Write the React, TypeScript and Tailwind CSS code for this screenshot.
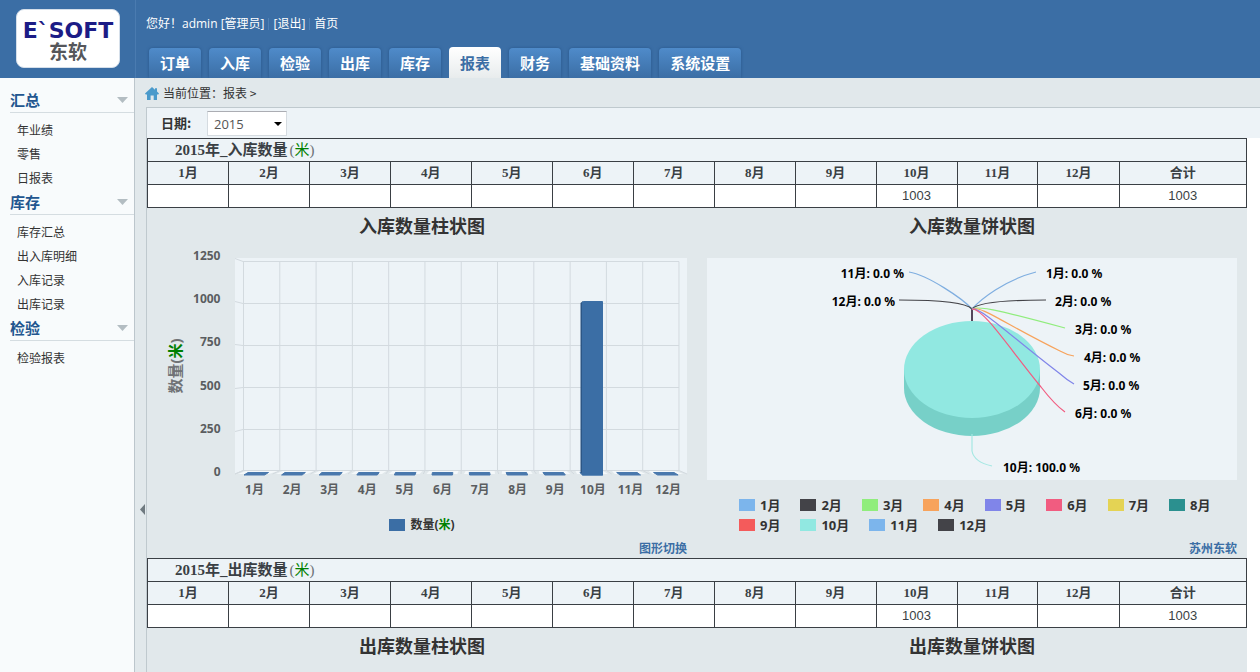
import React from "react";

const months = ["1月", "2月", "3月", "4月", "5月", "6月", "7月", "8月", "9月", "10月", "11月", "12月"];

const tabs = ["订单", "入库", "检验", "出库", "库存", "报表", "财务", "基础资料", "系统设置"];

const menu = [
  { title: "汇总", items: ["年业绩", "零售", "日报表"] },
  { title: "库存", items: ["库存汇总", "出入库明细", "入库记录", "出库记录"] },
  { title: "检验", items: ["检验报表"] },
];

const legend = [
  ["1月", "bg-[#7cb5ec]"],
  ["2月", "bg-[#434348]"],
  ["3月", "bg-[#90ed7d]"],
  ["4月", "bg-[#f7a35c]"],
  ["5月", "bg-[#8085e9]"],
  ["6月", "bg-[#f15c80]"],
  ["7月", "bg-[#e4d354]"],
  ["8月", "bg-[#2b908f]"],
  ["9月", "bg-[#f45b5b]"],
  ["10月", "bg-[#91e8e1]"],
  ["11月", "bg-[#7cb5ec]"],
  ["12月", "bg-[#434348]"],
];

const sans = "font-['Noto_Sans','Noto_Sans_CJK_SC',sans-serif]";
const serif = "font-['Liberation_Serif','Noto_Sans_CJK_SC',serif]";

function Logo() {
  return (
    <a
      href="#home"
      className="flex h-[59px] w-[104px] flex-col items-center rounded-lg border border-[#d5dfea] bg-white pt-[10px] font-bold"
    >
      <span className="font-['DejaVu_Sans',sans-serif] text-[22px] leading-[22px] text-[#1c1c86]">E`SOFT</span>
      <span className="text-[19px] leading-[18px] text-[#55565a]">东软</span>
    </a>
  );
}

function Header() {
  return (
    <header className="flex h-[78px] bg-[#3b6ea5] text-white">
      <div className="w-[136px] shrink-0 border-r border-[#4a7bb0] pt-[9px] pl-4">
        <Logo />
      </div>
      <div className="flex flex-1 flex-col justify-between">
        <div className="flex items-center pt-4 pl-[10px] font-['Open_Sans','Noto_Sans_CJK_SC',sans-serif] text-xs leading-4">
          <span>您好！admin [管理员]</span>
          <span className="mx-1 h-3 w-px bg-[#4f80b5]" />
          <a href="#logout">[退出]</a>
          <span className="mx-1 h-3 w-px bg-[#4f80b5]" />
          <a href="#home">首页</a>
        </div>
        <nav className="flex items-end gap-2 overflow-hidden pt-1 pl-[13px]">
          {tabs.map((t) => (
            <a
              key={t}
              href={"#" + t}
              className={
                t === "报表"
                  ? "h-[31px] rounded-t bg-linear-to-b from-white to-[#e8eced] px-[11px] text-[15px] leading-[32px] font-bold text-[#3b6ea5]"
                  : "h-[30px] rounded-t bg-linear-to-b from-[#4f8bca] to-[#3b6ea5] px-[11px] text-[15px] leading-[30px] font-bold text-white shadow-[0_0_3px_#27558a]"
              }
            >
              {t}
            </a>
          ))}
        </nav>
      </div>
    </header>
  );
}

function Sidebar() {
  return (
    <aside className="w-[135px] shrink-0 border-r border-[#bcc6cc] bg-[#f8fbfc] pt-[10px]">
      {menu.map((g) => (
        <section key={g.title} className="pl-[10px]">
          <button
            type="button"
            className="flex w-full items-center justify-between border-b border-[#d5dde1] pr-[6px] text-[15px] leading-6 font-bold text-[#22568f]"
          >
            {g.title}
            <svg width="11" height="6" viewBox="0 0 11 6" aria-hidden="true">
              <path d="M0 0h11L5.500 6z" fill="#b3bdc2" />
            </svg>
          </button>
          <ul className="pt-[5px] pl-[7px] text-xs leading-6 text-[#333]">
            {g.items.map((i) => (
              <li key={i}>
                <a href={"#" + i}>{i}</a>
              </li>
            ))}
          </ul>
        </section>
      ))}
    </aside>
  );
}

function QuantityTable({ name }: { name: string }) {
  return (
    <table className="w-full table-fixed border-collapse text-center text-[13px] text-[#3a3f44]">
      <colgroup>
        {months.map((m) => (
          <col key={m} />
        ))}
        <col className="w-[11.6%]" />
      </colgroup>
      <thead className={`bg-[#edf3f7] ${serif}`}>
        <tr className="h-[23px]">
          <th colSpan={13} className="border border-[#3a3f44] py-0 pl-[27px] text-left text-[15px] leading-[22px]">
            2015年_{name}
            <span className="pl-[2px] font-normal text-[#6b7075]">
              (<span className="text-[#008000]">米</span>)
            </span>
          </th>
        </tr>
        <tr className="h-[23px]">
          {[...months, "合计"].map((m) => (
            <th key={m} className="border border-[#3a3f44] p-0 leading-[22px]">
              {m}
            </th>
          ))}
        </tr>
      </thead>
      <tbody className="bg-white font-['Liberation_Sans',sans-serif]">
        <tr className="h-[23px]">
          {[...months, "合计"].map((m) => (
            <td key={m} className="border border-[#3a3f44] p-0 leading-[22px]">
              {m === "10月" || m === "合计" ? "1003" : ""}
            </td>
          ))}
        </tr>
      </tbody>
    </table>
  );
}

const gridRows = [
  { label: "1250", back: 17.5, front: 14.5 },
  { label: "1000", back: 59.5, front: 57.5 },
  { label: "750", back: 101.5, front: 100.5 },
  { label: "500", back: 143.5, front: 144.5 },
  { label: "250", back: 185.5, front: 187.5 },
  { label: "0", back: 226.5, front: 230 },
];

function BarPlot() {
  return (
    <svg viewBox="0 0 550 251" className={`block h-auto w-full overflow-visible font-bold ${sans}`}>
      <path d="M88 14H540V230L532 226.500H96L88 230z" fill="#edf3f7" />
      <g stroke="#d3dadf" fill="none">
        {gridRows.map((r) => (
          <path key={r.label} d={`M88 ${r.front}L96 ${r.back}H532`} />
        ))}
        {Array.from({ length: 13 }, (_, i) => {
          const x = 96.5 + i * 36.29;
          return <path key={i} d={`M${x} 17.500V226.500L${88 + i * 37.67} 230`} />;
        })}
      </g>
      <g fill="#f4f8fa">
        {months.map((m, i) => (
          <path key={m} d={`M${91 + i * 37.67} 230L${99 + i * 36.6} 227H${131 + i * 36.1}L${122 + i * 37.67} 230z`} />
        ))}
      </g>
      {months.map((m, i) => {
        const x = 97 + i * 37.6;
        const s = 4 - i * 0.73;
        return <path key={m} d={`M${x} 231L${x + s} 228.500H${x + s + 20.5}L${x + 20.5} 231z`} fill="#4a79ad" stroke="#4a79ad" strokeLinejoin="round" />;
      })}
      <path d="M433.500 59L436 57V228L436 231L433.500 228z" fill="#2c5685" />
      <path d="M435.500 58L437 57.500H455.500V231H435.500z" fill="#3b6ea5" stroke="#3b6ea5" strokeLinejoin="round" />
      <g fontSize="12" fill="#5a5d60">
        {gridRows.map((r, i) => (
          <text key={r.label} x="73.500" y={16 + i * 43.2} textAnchor="end">
            {r.label}
          </text>
        ))}
        {months.map((m, i) => (
          <text key={m} x={107.5 + i * 37.6} y="249.500" textAnchor="middle">
            {m}
          </text>
        ))}
      </g>
      <text transform="translate(34 122) rotate(-90)" textAnchor="middle" fontSize="15" fill="#707376">
        数量(<tspan fill="#008000">米</tspan>)
      </text>
    </svg>
  );
}

const slices = [
  { t: "1月: 0.0 %", x: 349, y: 34, c: "#7faee0", d: "M275 65C284 55 308 36 339 28" },
  { t: "2月: 0.0 %", x: 358, y: 62, c: "#434348", d: "M275 65C281 58 315 56 349 56" },
  { t: "3月: 0.0 %", x: 378, y: 90, c: "#90ed7d", d: "M275 65C282 61 312 69 368 84" },
  { t: "4月: 0.0 %", x: 387, y: 118, c: "#f7a35c", d: "M275 65C283 61 308 80 363 107Q370 111 377 112" },
  { t: "5月: 0.0 %", x: 386, y: 146, c: "#8085e9", d: "M275 65C284 63 317 95 362 129Q370 136 377 140" },
  { t: "6月: 0.0 %", x: 378, y: 174, c: "#f15c80", d: "M275 65C287 65 312 104 344 143Q358 161 368 168" },
  { t: "10月: 100.0 %", x: 306, y: 228, c: "#a5e8e3", d: "M275 190V207Q277 218 295 222" },
];

const leftSlices = [
  { t: "11月: 0.0 %", x: 207, y: 34, c: "#7faee0", d: "M275 65C266 55 231 31 212 28" },
  { t: "12月: 0.0 %", x: 198, y: 62, c: "#434348", d: "M275 65C269 58 235 56 202 56" },
];

function PiePlot() {
  return (
    <svg viewBox="0 0 550 251" className={`block h-auto w-full overflow-visible font-bold ${sans}`}>
      <rect x="10" y="14" width="530" height="222" fill="#edf3f7" />
      <path d="M207 126V144A68 48 0 0 0 343 144V126z" fill="#77d0c8" />
      <ellipse cx="275" cy="125.500" rx="68" ry="48.500" fill="#91e8e1" />
      <path d="M275 64V77" stroke="#54465a" strokeWidth="2" />
      {[...leftSlices, ...slices].map((s) => (
        <path key={s.t} d={s.d} fill="none" stroke={s.c} strokeWidth="1.200" />
      ))}
      <g fontSize="12" fill="#000">
        {leftSlices.map((s) => (
          <text key={s.t} x={s.x} y={s.y} textAnchor="end">
            {s.t}
          </text>
        ))}
        {slices.map((s) => (
          <text key={s.t} x={s.x} y={s.y}>
            {s.t}
          </text>
        ))}
      </g>
    </svg>
  );
}

function ChartTitle({ children }: { children: React.ReactNode }) {
  return <h2 className="flex-1 pb-[2px] text-center text-lg leading-[34px] font-bold text-[#333]">{children}</h2>;
}

function Titles({ name }: { name: string }) {
  return (
    <div className="flex">
      <ChartTitle>{name}柱状图</ChartTitle>
      <ChartTitle>{name}饼状图</ChartTitle>
    </div>
  );
}

function Charts() {
  return (
    <div className={`flex text-xs font-bold text-[#333] ${sans}`}>
      <div className="flex-1">
        <BarPlot />
        <div className="flex h-10 items-end justify-center leading-5">
          <span className="flex items-center gap-[5px]">
            <i className="h-3 w-4 bg-[#3b6ea5]" />
            <span>
              数量(<span className="text-[#008000]">米</span>)
            </span>
          </span>
        </div>
        <div className="pt-1 pr-[10px] text-right leading-[19px] text-[#3b6ea5]">
          <a href="#switch">图形切换</a>
        </div>
      </div>
      <div className="flex-1">
        <PiePlot />
        <ul className="ml-[42px] flex h-10 max-w-[480px] flex-wrap gap-x-5 text-[13px] leading-5">
          {legend.map(([m, c]) => (
            <li key={m} className="flex items-center gap-[5px]">
              <i className={`h-3 w-4 ${c}`} />
              {m}
            </li>
          ))}
        </ul>
        <div className="pt-1 pr-[10px] text-right leading-[19px] text-[#3b6ea5]">
          <a href="#vendor">苏州东软</a>
        </div>
      </div>
    </div>
  );
}

export default function App() {
  return (
    <div className="flex min-h-screen flex-col bg-[#e1e8eb] font-['Noto_Sans_CJK_SC',sans-serif] text-xs text-[#333]">
      <Header />
      <div className="flex flex-1">
        <Sidebar />
        <button type="button" aria-label="收起菜单" className="flex w-[10px] shrink-0 justify-end pt-[426px]">
          <svg width="5" height="11" viewBox="0 0 5 11" aria-hidden="true">
            <path d="M5 0v11L0 5.500z" fill="#6f7a80" />
          </svg>
        </button>
        <main className="flex min-w-0 flex-1 flex-col">
          <div className="flex h-[29px] items-center gap-1 pt-px">
            <svg width="14" height="13" viewBox="0 0 14 13" aria-hidden="true">
              <path d="M7 0L10 2.700V1.200H12V4.500L14 6.600L13.300 7.400H12V13H8.700V8.500H5.600V13H2V7.400H.700L0 6.600z" fill="#4a9acb" />
            </svg>
            <span className="leading-[18px]">当前位置：报表 &gt;</span>
          </div>
          <div className="ml-px flex flex-1 flex-col border-t border-l border-[#bfc9ce] bg-white">
            <div className="flex h-[30px] items-center bg-[#edf3f7] pl-[14px]">
              <label htmlFor="year" className="w-[46px] text-[13px] font-bold">
                日期:
              </label>
              <div className="relative">
                <select
                  id="year"
                  defaultValue="2015"
                  className="block h-[25px] w-20 appearance-none border border-[#d5dbe0] border-t-[#abadb3] bg-white px-[6px] pt-[3px] font-['Open_Sans',sans-serif] text-[13px] text-[#555]"
                >
                  <option>2015</option>
                </select>
                <svg className="pointer-events-none absolute top-[11px] right-[5px]" width="8" height="4" viewBox="0 0 8 4" aria-hidden="true">
                  <path d="M0 0h8L4 4z" fill="#000" />
                </svg>
              </div>
            </div>
            <div className="mr-[13px] flex-1 bg-[#e1e8eb]">
              <QuantityTable name="入库数量" />
              <Titles name="入库数量" />
              <Charts />
              <QuantityTable name="出库数量" />
              <Titles name="出库数量" />
            </div>
          </div>
        </main>
      </div>
    </div>
  );
}
